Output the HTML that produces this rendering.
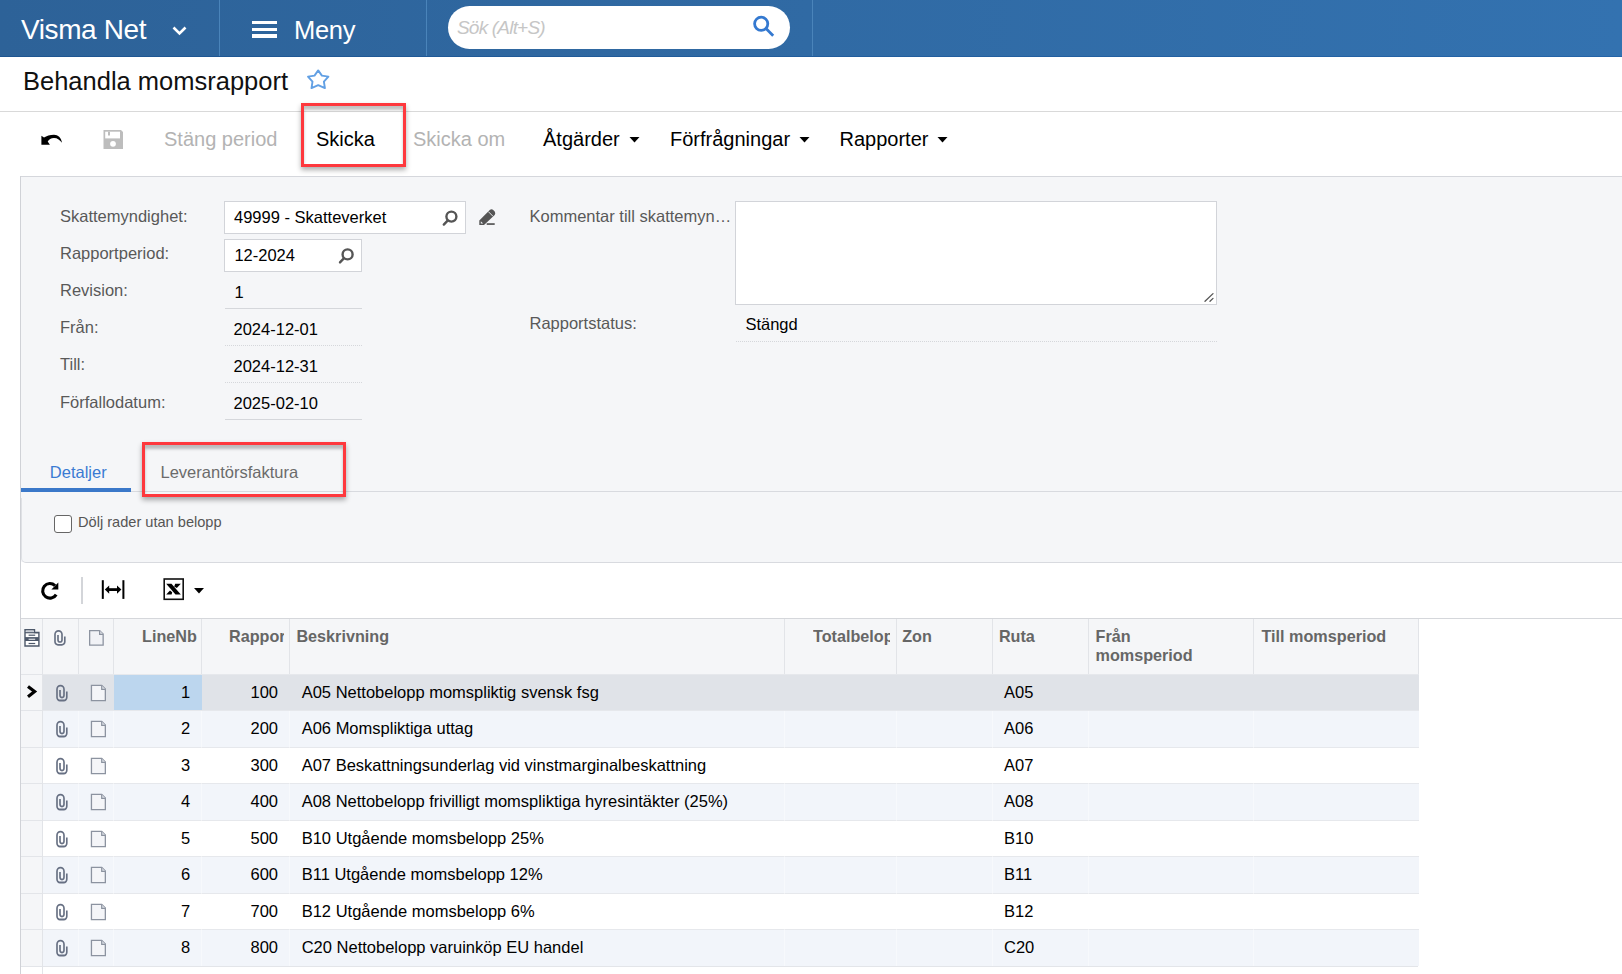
<!DOCTYPE html>
<html><head><meta charset="utf-8">
<style>
*{box-sizing:border-box;margin:0;padding:0}
html,body{width:1622px;height:974px;overflow:hidden;background:#fff}
body{position:relative;font-family:"Liberation Sans",sans-serif;color:#000}
.a{position:absolute}
.t{position:absolute;white-space:nowrap;line-height:1}
svg{position:absolute;overflow:visible}
#hdr{left:0;top:0;width:1622px;height:57px;background:linear-gradient(to right,#2d6298,#3372b0)}
#hdrb{left:0;top:56px;width:1622px;height:1px;background:linear-gradient(to right,#1e5590,#2464a8)}
.vd{position:absolute;top:0;width:1px;height:56px;background:#4a84ba}
.lbl{font-size:16.5px;color:#595959}
.val{font-size:16.5px;color:#000}
.tb{font-size:20px;color:#000}
.tbg{font-size:20px;color:#b3b3b3}
.redbox{position:absolute;border:3px solid #fe383d;box-shadow:0 3px 5px rgba(0,0,0,.32), inset 0 4px 3px rgba(0,0,0,.24)}
.gh{font-size:16.2px;font-weight:bold;color:#666}
.gc{font-size:16.5px;color:#000}
.row{position:absolute;left:42px;width:1376px}
.rowsel{position:absolute;left:21px;width:21px}
.vl{position:absolute;width:1px;background:#e2e4e8}
</style></head><body>

<!-- HEADER -->
<div id="hdr" class="a"></div><div id="hdrb" class="a"></div>
<div class="vd" style="left:219px"></div>
<div class="vd" style="left:426px"></div>
<div class="vd" style="left:812px"></div>
<div class="t" style="left:21px;top:16px;font-size:28px;letter-spacing:-0.4px;color:#fff">Visma Net</div>
<svg style="left:0;top:0" width="1" height="1"><polyline points="173.5,27.5 179.5,33.5 185.5,27.5" fill="none" stroke="#fff" stroke-width="2.6"/></svg>
<div class="a" style="left:252px;top:21px;width:25px;height:3.2px;background:#fff"></div>
<div class="a" style="left:252px;top:27.6px;width:25px;height:3.3px;background:#fff"></div>
<div class="a" style="left:252px;top:34.3px;width:25px;height:3.3px;background:#fff"></div>
<div class="t" style="left:294px;top:17.5px;font-size:25.5px;letter-spacing:-0.3px;color:#fff">Meny</div>
<div class="a" style="left:448px;top:6px;width:342px;height:43px;border-radius:21.5px;background:#fff"></div>
<div class="t" style="left:457px;top:17.6px;font-size:19px;font-style:italic;letter-spacing:-0.8px;color:#c6c6c6">Sök (Alt+S)</div>
<svg style="left:0;top:0" width="1" height="1"><circle cx="761.2" cy="23.8" r="6.6" fill="none" stroke="#3479d0" stroke-width="2.8"/><line x1="766" y1="28.6" x2="773.2" y2="35.8" stroke="#3479d0" stroke-width="2.8"/></svg>

<!-- TITLE -->
<div class="t" style="left:23px;top:68.6px;font-size:25.5px;color:#111">Behandla momsrapport</div>
<svg style="left:0;top:0" width="1" height="1"><polygon points="318.2,70.4 321.9,75.6 328.4,76.6 323.9,81.6 324.9,88.1 318.2,85.2 311.5,88.1 312.5,81.6 308,76.6 314.5,75.6" fill="none" stroke="#62a0e4" stroke-width="1.9" stroke-linejoin="round"/></svg>
<div class="a" style="left:0;top:111px;width:1622px;height:1px;background:#d9d9d9"></div>

<!-- TOOLBAR -->
<svg style="left:0;top:0" width="1" height="1">
 <path d="M41.4,135.8 L44,137.6 C46.5,135.9 50,134.8 54,134.8 C58,134.8 61.2,137.8 62,142.7 C60,140 57.5,137.9 54,137.9 C51,137.9 48.8,139.5 47.7,141.5 L49.9,144.8 L41.4,144.8 Z" fill="#000"/>
</svg>
<svg style="left:0;top:0" width="1" height="1">
 <path d="M103.5,130 L121,130 L123,132 L123,149 L103.5,149 Z" fill="#bdbdbd"/>
 <rect x="105.2" y="131.7" width="14.8" height="6.7" fill="#fff"/>
 <rect x="108" y="131.7" width="2" height="3.8" fill="#bdbdbd"/>
 <circle cx="113" cy="143.8" r="2.9" fill="#fff"/>
</svg>
<div class="t tbg" style="left:164px;top:128.7px">Stäng period</div>
<div class="t tb" style="left:316px;top:128.7px">Skicka</div>
<div class="t tbg" style="left:413px;top:128.7px">Skicka om</div>
<div class="t tb" style="left:543px;top:128.7px">Åtgärder</div>
<div class="t tb" style="left:670px;top:128.7px">Förfrågningar</div>
<div class="t tb" style="left:839.5px;top:128.7px">Rapporter</div>
<svg style="left:0;top:0" width="1" height="1" fill="#000">
 <polygon points="629.5,137 639.5,137 634.5,142.5"/>
 <polygon points="799.5,137 809.5,137 804.5,142.5"/>
 <polygon points="937.5,137 947.5,137 942.5,142.5"/>
</svg>

<!-- FORM PANEL -->
<div class="a" style="left:20px;top:176px;width:1602px;height:386px;background:#f5f6f8;border-top:1px solid #d5d7dc"></div>
<div class="a" style="left:20px;top:176px;width:1px;height:798px;background:#d0d2d7"></div>

<div class="t lbl" style="left:60px;top:208px">Skattemyndighet:</div>
<div class="t lbl" style="left:60px;top:245px">Rapportperiod:</div>
<div class="t lbl" style="left:60px;top:282px">Revision:</div>
<div class="t lbl" style="left:60px;top:318.8px">Från:</div>
<div class="t lbl" style="left:60px;top:356px">Till:</div>
<div class="t lbl" style="left:60px;top:393.5px">Förfallodatum:</div>

<div class="a" style="left:224px;top:201px;width:242px;height:33px;background:#fff;border:1px solid #d2d4d9"></div>
<div class="t val" style="left:234px;top:209px">49999 - Skatteverket</div>
<div class="a" style="left:224px;top:239px;width:138px;height:33px;background:#fff;border:1px solid #d2d4d9"></div>
<div class="t val" style="left:234.4px;top:246.8px">12-2024</div>
<svg style="left:0;top:0" width="1" height="1" stroke="#555" fill="none" stroke-width="2.4" stroke-linecap="round">
 <circle cx="451.4" cy="216.6" r="5"/><line x1="447.6" y1="220.6" x2="443.8" y2="224.6"/>
 <circle cx="347.6" cy="254.4" r="5"/><line x1="343.8" y1="258.4" x2="340" y2="262.4"/>
</svg>
<svg style="left:0;top:0" width="1" height="1">
 <path d="M479.3,220.5 L490,209.8 Q491.8,208.6 493.5,210.3 L494.7,211.5 Q495.9,213.2 494.7,215 L484,225 L479.3,225 Z" fill="#555"/>
 <line x1="488.3" y1="211.6" x2="493" y2="216.3" stroke="#f5f6f8" stroke-width="0.9"/>
 <path d="M480.8,221.3 L483.2,223.6 L480.8,223.6 Z" fill="#f5f6f8"/>
 <rect x="486.7" y="223.2" width="8" height="1.7" fill="#555"/>
</svg>

<div class="t val" style="left:234.5px;top:283.6px">1</div>
<div class="a" style="left:224.5px;top:307.5px;width:137px;height:1px;background:#d5d7db"></div>
<div class="t val" style="left:233.5px;top:320.7px">2024-12-01</div>
<div class="a" style="left:224.5px;top:345px;width:137px;height:0;border-top:1px dotted #d5d7db"></div>
<div class="t val" style="left:233.5px;top:357.9px">2024-12-31</div>
<div class="a" style="left:224.5px;top:382px;width:137px;height:0;border-top:1px dotted #d5d7db"></div>
<div class="t val" style="left:233.5px;top:394.5px">2025-02-10</div>
<div class="a" style="left:224.5px;top:418.7px;width:137px;height:1px;background:#d5d7db"></div>

<div class="t lbl" style="left:529.5px;top:208px">Kommentar till skattemyn…</div>
<div class="a" style="left:735px;top:201px;width:482px;height:104px;background:#fff;border:1px solid #d2d4d9"></div>
<svg style="left:0;top:0" width="1" height="1" stroke="#555" stroke-width="1.3" stroke-linecap="round">
 <line x1="1205" y1="301.3" x2="1213" y2="293.6"/><line x1="1210" y1="301.3" x2="1213" y2="298.4"/>
</svg>
<div class="t lbl" style="left:529.5px;top:314.8px">Rapportstatus:</div>
<div class="t val" style="left:745.4px;top:316.4px">Stängd</div>
<div class="a" style="left:735.5px;top:341px;width:481px;height:0;border-top:1px dotted #d5d7db"></div>

<!-- TABS -->
<div class="t" style="left:49.8px;top:464.2px;font-size:16.5px;color:#3a7bd3">Detaljer</div>
<div class="t" style="left:160.5px;top:464.2px;font-size:16.5px;color:#6b6b6b">Leverantörsfaktura</div>
<div class="a" style="left:21px;top:488px;width:110px;height:4px;background:#3a78c9"></div>
<div class="a" style="left:131px;top:491px;width:1491px;height:1px;background:#d8dadf"></div>
<div class="a" style="left:21px;top:498px;width:1601px;height:65px;border-left:1px solid #dfe1e5;border-bottom:1px solid #d8dadf;border-bottom-left-radius:5px"></div>
<div class="a" style="left:54px;top:515px;width:17.6px;height:17.6px;border:1.8px solid #666;border-radius:3px;background:#fff"></div>
<div class="t" style="left:78px;top:515.2px;font-size:14.6px;color:#555">Dölj rader utan belopp</div>

<!-- GRID TOOLBAR -->
<svg style="left:0;top:0" width="1" height="1">
 <path d="M55,585.6 A7.3,7.3 0 1 0 56.2,594.6" fill="none" stroke="#000" stroke-width="3.1"/>
 <polygon points="51.4,589.4 58.3,589.4 58.3,582.4" fill="#000"/>
</svg>
<div class="a" style="left:81px;top:577px;width:2px;height:27px;background:#d3d5d9"></div>
<svg style="left:0;top:0" width="1" height="1">
 <rect x="101.8" y="580.2" width="2" height="18.7" fill="#000"/>
 <rect x="122.4" y="580.2" width="2" height="18.7" fill="#000"/>
 <rect x="107" y="588.2" width="12" height="2.8" fill="#000"/>
 <polygon points="104.8,589.6 109.2,585.4 109.2,593.8" fill="#000"/>
 <polygon points="121.4,589.6 117,585.4 117,593.8" fill="#000"/>
</svg>
<svg style="left:0;top:0" width="1" height="1">
 <rect x="164.2" y="579" width="19" height="20.3" fill="none" stroke="#111" stroke-width="1.6"/>
 <path d="M166.2,583.8 L171.5,583.8 L180.8,594.6 L175.5,594.6 Z" fill="#000"/>
 <path d="M175.2,583.8 L180.8,583.8 L176.8,588 L174.2,586.4 Z" fill="#000"/>
 <path d="M166.2,594.6 L170,590.4 L172.2,592.2 L171.6,594.6 Z" fill="#000"/>
</svg>
<svg style="left:0;top:0" width="1" height="1"><polygon points="194,588 204,588 199,593.6" fill="#000"/></svg>

<!-- GRID -->
<div class="a" style="left:21px;top:618px;width:1601px;height:1px;background:#d5d7db"></div>
<div class="a" style="left:21px;top:619px;width:1397px;height:55.2px;background:#f5f6f8"></div>

<!--ROWS-->
<div class="a" style="left:21px;top:674.00px;width:21px;height:36.00px;background:#f5f6f8;border-top:1px solid #e3e5e9"></div>
<div class="a" style="left:42px;top:674.00px;width:1377px;height:36.00px;background:#e0e3e8;border-top:1px solid #e6e8ec"></div>
<div class="a" style="left:114px;top:675.00px;width:88px;height:35.00px;background:#bcd6ee"></div>
<svg style="left:0;top:0" width="1" height="1"><polyline points="28,686.40 34.6,691.60 28,696.80" fill="none" stroke="#000" stroke-width="3.2"/></svg>
<svg style="left:0;top:0" width="1" height="1"><g transform="translate(56,683.60) scale(1,1.07)"><path d="M4,6 L4,11 A2,2 0 0 0 8,11 L8,5.3 A3.5,3.5 0 0 0 1,5.3 L1,12.8 A3,3 0 0 0 4,15.8 L7.8,15.8 A3,3 0 0 0 10.8,12.8 L10.8,7.5" fill="none" stroke="#677083" stroke-width="1.65"/></g></svg>
<svg style="left:0;top:0" width="1" height="1"><g transform="translate(90.8,684.80)"><path d="M0.65,0.65 L10.9,0.65 L14.55,4.3 L14.55,15.75 L0.65,15.75 Z" fill="#f4f5f8" stroke="#8c93a0" stroke-width="1.3"/><path d="M10.9,0.65 L10.9,4.5 L14.55,4.5" fill="#dfe2e8" stroke="#8c93a0" stroke-width="1.2"/></g></svg>
<div class="t gc" style="right:1431.8px;top:683.63px">1</div>
<div class="t gc" style="right:1344.0px;top:683.63px">100</div>
<div class="t gc" style="left:301.7px;top:683.63px">A05 Nettobelopp momspliktig svensk fsg</div>
<div class="t gc" style="left:1004px;top:683.63px">A05</div>
<div class="a" style="left:21px;top:710.00px;width:21px;height:37.00px;background:#f5f6f8;border-top:1px solid #e3e5e9"></div>
<div class="a" style="left:42px;top:710.00px;width:1377px;height:37.00px;background:#f2f5fa;border-top:1px solid #e6e8ec"></div>
<svg style="left:0;top:0" width="1" height="1"><g transform="translate(56,719.60) scale(1,1.07)"><path d="M4,6 L4,11 A2,2 0 0 0 8,11 L8,5.3 A3.5,3.5 0 0 0 1,5.3 L1,12.8 A3,3 0 0 0 4,15.8 L7.8,15.8 A3,3 0 0 0 10.8,12.8 L10.8,7.5" fill="none" stroke="#677083" stroke-width="1.65"/></g></svg>
<svg style="left:0;top:0" width="1" height="1"><g transform="translate(90.8,720.80)"><path d="M0.65,0.65 L10.9,0.65 L14.55,4.3 L14.55,15.75 L0.65,15.75 Z" fill="#f4f5f8" stroke="#8c93a0" stroke-width="1.3"/><path d="M10.9,0.65 L10.9,4.5 L14.55,4.5" fill="#dfe2e8" stroke="#8c93a0" stroke-width="1.2"/></g></svg>
<div class="t gc" style="right:1431.8px;top:719.63px">2</div>
<div class="t gc" style="right:1344.0px;top:719.63px">200</div>
<div class="t gc" style="left:301.7px;top:719.63px">A06 Momspliktiga uttag</div>
<div class="t gc" style="left:1004px;top:719.63px">A06</div>
<div class="a" style="left:21px;top:747.00px;width:21px;height:36.00px;background:#f5f6f8;border-top:1px solid #e3e5e9"></div>
<div class="a" style="left:42px;top:747.00px;width:1377px;height:36.00px;background:#ffffff;border-top:1px solid #e6e8ec"></div>
<svg style="left:0;top:0" width="1" height="1"><g transform="translate(56,756.60) scale(1,1.07)"><path d="M4,6 L4,11 A2,2 0 0 0 8,11 L8,5.3 A3.5,3.5 0 0 0 1,5.3 L1,12.8 A3,3 0 0 0 4,15.8 L7.8,15.8 A3,3 0 0 0 10.8,12.8 L10.8,7.5" fill="none" stroke="#677083" stroke-width="1.65"/></g></svg>
<svg style="left:0;top:0" width="1" height="1"><g transform="translate(90.8,757.80)"><path d="M0.65,0.65 L10.9,0.65 L14.55,4.3 L14.55,15.75 L0.65,15.75 Z" fill="#f4f5f8" stroke="#8c93a0" stroke-width="1.3"/><path d="M10.9,0.65 L10.9,4.5 L14.55,4.5" fill="#dfe2e8" stroke="#8c93a0" stroke-width="1.2"/></g></svg>
<div class="t gc" style="right:1431.8px;top:756.63px">3</div>
<div class="t gc" style="right:1344.0px;top:756.63px">300</div>
<div class="t gc" style="left:301.7px;top:756.63px">A07 Beskattningsunderlag vid vinstmarginalbeskattning</div>
<div class="t gc" style="left:1004px;top:756.63px">A07</div>
<div class="a" style="left:21px;top:783.00px;width:21px;height:37.00px;background:#f5f6f8;border-top:1px solid #e3e5e9"></div>
<div class="a" style="left:42px;top:783.00px;width:1377px;height:37.00px;background:#f2f5fa;border-top:1px solid #e6e8ec"></div>
<svg style="left:0;top:0" width="1" height="1"><g transform="translate(56,792.60) scale(1,1.07)"><path d="M4,6 L4,11 A2,2 0 0 0 8,11 L8,5.3 A3.5,3.5 0 0 0 1,5.3 L1,12.8 A3,3 0 0 0 4,15.8 L7.8,15.8 A3,3 0 0 0 10.8,12.8 L10.8,7.5" fill="none" stroke="#677083" stroke-width="1.65"/></g></svg>
<svg style="left:0;top:0" width="1" height="1"><g transform="translate(90.8,793.80)"><path d="M0.65,0.65 L10.9,0.65 L14.55,4.3 L14.55,15.75 L0.65,15.75 Z" fill="#f4f5f8" stroke="#8c93a0" stroke-width="1.3"/><path d="M10.9,0.65 L10.9,4.5 L14.55,4.5" fill="#dfe2e8" stroke="#8c93a0" stroke-width="1.2"/></g></svg>
<div class="t gc" style="right:1431.8px;top:792.63px">4</div>
<div class="t gc" style="right:1344.0px;top:792.63px">400</div>
<div class="t gc" style="left:301.7px;top:792.63px">A08 Nettobelopp frivilligt momspliktiga hyresintäkter (25%)</div>
<div class="t gc" style="left:1004px;top:792.63px">A08</div>
<div class="a" style="left:21px;top:820.00px;width:21px;height:36.00px;background:#f5f6f8;border-top:1px solid #e3e5e9"></div>
<div class="a" style="left:42px;top:820.00px;width:1377px;height:36.00px;background:#ffffff;border-top:1px solid #e6e8ec"></div>
<svg style="left:0;top:0" width="1" height="1"><g transform="translate(56,829.60) scale(1,1.07)"><path d="M4,6 L4,11 A2,2 0 0 0 8,11 L8,5.3 A3.5,3.5 0 0 0 1,5.3 L1,12.8 A3,3 0 0 0 4,15.8 L7.8,15.8 A3,3 0 0 0 10.8,12.8 L10.8,7.5" fill="none" stroke="#677083" stroke-width="1.65"/></g></svg>
<svg style="left:0;top:0" width="1" height="1"><g transform="translate(90.8,830.80)"><path d="M0.65,0.65 L10.9,0.65 L14.55,4.3 L14.55,15.75 L0.65,15.75 Z" fill="#f4f5f8" stroke="#8c93a0" stroke-width="1.3"/><path d="M10.9,0.65 L10.9,4.5 L14.55,4.5" fill="#dfe2e8" stroke="#8c93a0" stroke-width="1.2"/></g></svg>
<div class="t gc" style="right:1431.8px;top:829.63px">5</div>
<div class="t gc" style="right:1344.0px;top:829.63px">500</div>
<div class="t gc" style="left:301.7px;top:829.63px">B10 Utgående momsbelopp 25%</div>
<div class="t gc" style="left:1004px;top:829.63px">B10</div>
<div class="a" style="left:21px;top:856.00px;width:21px;height:37.00px;background:#f5f6f8;border-top:1px solid #e3e5e9"></div>
<div class="a" style="left:42px;top:856.00px;width:1377px;height:37.00px;background:#f2f5fa;border-top:1px solid #e6e8ec"></div>
<svg style="left:0;top:0" width="1" height="1"><g transform="translate(56,865.60) scale(1,1.07)"><path d="M4,6 L4,11 A2,2 0 0 0 8,11 L8,5.3 A3.5,3.5 0 0 0 1,5.3 L1,12.8 A3,3 0 0 0 4,15.8 L7.8,15.8 A3,3 0 0 0 10.8,12.8 L10.8,7.5" fill="none" stroke="#677083" stroke-width="1.65"/></g></svg>
<svg style="left:0;top:0" width="1" height="1"><g transform="translate(90.8,866.80)"><path d="M0.65,0.65 L10.9,0.65 L14.55,4.3 L14.55,15.75 L0.65,15.75 Z" fill="#f4f5f8" stroke="#8c93a0" stroke-width="1.3"/><path d="M10.9,0.65 L10.9,4.5 L14.55,4.5" fill="#dfe2e8" stroke="#8c93a0" stroke-width="1.2"/></g></svg>
<div class="t gc" style="right:1431.8px;top:865.63px">6</div>
<div class="t gc" style="right:1344.0px;top:865.63px">600</div>
<div class="t gc" style="left:301.7px;top:865.63px">B11 Utgående momsbelopp 12%</div>
<div class="t gc" style="left:1004px;top:865.63px">B11</div>
<div class="a" style="left:21px;top:893.00px;width:21px;height:36.00px;background:#f5f6f8;border-top:1px solid #e3e5e9"></div>
<div class="a" style="left:42px;top:893.00px;width:1377px;height:36.00px;background:#ffffff;border-top:1px solid #e6e8ec"></div>
<svg style="left:0;top:0" width="1" height="1"><g transform="translate(56,902.60) scale(1,1.07)"><path d="M4,6 L4,11 A2,2 0 0 0 8,11 L8,5.3 A3.5,3.5 0 0 0 1,5.3 L1,12.8 A3,3 0 0 0 4,15.8 L7.8,15.8 A3,3 0 0 0 10.8,12.8 L10.8,7.5" fill="none" stroke="#677083" stroke-width="1.65"/></g></svg>
<svg style="left:0;top:0" width="1" height="1"><g transform="translate(90.8,903.80)"><path d="M0.65,0.65 L10.9,0.65 L14.55,4.3 L14.55,15.75 L0.65,15.75 Z" fill="#f4f5f8" stroke="#8c93a0" stroke-width="1.3"/><path d="M10.9,0.65 L10.9,4.5 L14.55,4.5" fill="#dfe2e8" stroke="#8c93a0" stroke-width="1.2"/></g></svg>
<div class="t gc" style="right:1431.8px;top:902.63px">7</div>
<div class="t gc" style="right:1344.0px;top:902.63px">700</div>
<div class="t gc" style="left:301.7px;top:902.63px">B12 Utgående momsbelopp 6%</div>
<div class="t gc" style="left:1004px;top:902.63px">B12</div>
<div class="a" style="left:21px;top:929.00px;width:21px;height:37.00px;background:#f5f6f8;border-top:1px solid #e3e5e9"></div>
<div class="a" style="left:42px;top:929.00px;width:1377px;height:37.00px;background:#f2f5fa;border-top:1px solid #e6e8ec"></div>
<svg style="left:0;top:0" width="1" height="1"><g transform="translate(56,938.60) scale(1,1.07)"><path d="M4,6 L4,11 A2,2 0 0 0 8,11 L8,5.3 A3.5,3.5 0 0 0 1,5.3 L1,12.8 A3,3 0 0 0 4,15.8 L7.8,15.8 A3,3 0 0 0 10.8,12.8 L10.8,7.5" fill="none" stroke="#677083" stroke-width="1.65"/></g></svg>
<svg style="left:0;top:0" width="1" height="1"><g transform="translate(90.8,939.80)"><path d="M0.65,0.65 L10.9,0.65 L14.55,4.3 L14.55,15.75 L0.65,15.75 Z" fill="#f4f5f8" stroke="#8c93a0" stroke-width="1.3"/><path d="M10.9,0.65 L10.9,4.5 L14.55,4.5" fill="#dfe2e8" stroke="#8c93a0" stroke-width="1.2"/></g></svg>
<div class="t gc" style="right:1431.8px;top:938.63px">8</div>
<div class="t gc" style="right:1344.0px;top:938.63px">800</div>
<div class="t gc" style="left:301.7px;top:938.63px">C20 Nettobelopp varuinköp EU handel</div>
<div class="t gc" style="left:1004px;top:938.63px">C20</div>
<div class="a" style="left:78px;top:711px;width:1px;height:255px;background:rgba(255,255,255,.4)"></div>
<div class="a" style="left:113px;top:711px;width:1px;height:255px;background:rgba(255,255,255,.4)"></div>
<div class="a" style="left:201px;top:711px;width:1px;height:255px;background:rgba(255,255,255,.4)"></div>
<div class="a" style="left:289px;top:711px;width:1px;height:255px;background:rgba(255,255,255,.4)"></div>
<div class="a" style="left:784px;top:711px;width:1px;height:255px;background:rgba(255,255,255,.4)"></div>
<div class="a" style="left:896px;top:711px;width:1px;height:255px;background:rgba(255,255,255,.4)"></div>
<div class="a" style="left:992px;top:711px;width:1px;height:255px;background:rgba(255,255,255,.4)"></div>
<div class="a" style="left:1088px;top:711px;width:1px;height:255px;background:rgba(255,255,255,.4)"></div>
<div class="a" style="left:1253px;top:711px;width:1px;height:255px;background:rgba(255,255,255,.4)"></div>
<div class="a" style="left:21px;top:966.00px;width:1397px;height:1px;background:#e3e5e9"></div>
<!--/ROWS-->

<!-- header col lines -->
<div class="vl" style="left:42px;top:619px;height:355px"></div>
<div class="vl" style="left:78px;top:619px;height:55px"></div>
<div class="vl" style="left:113px;top:619px;height:55px"></div>
<div class="vl" style="left:201px;top:619px;height:55px"></div>
<div class="vl" style="left:289px;top:619px;height:55px"></div>
<div class="vl" style="left:784px;top:619px;height:55px"></div>
<div class="vl" style="left:896px;top:619px;height:55px"></div>
<div class="vl" style="left:992px;top:619px;height:55px"></div>
<div class="vl" style="left:1088px;top:619px;height:55px"></div>
<div class="vl" style="left:1253px;top:619px;height:55px"></div>
<div class="vl" style="left:1418px;top:619px;height:55px"></div>

<div class="t gh" style="left:142px;top:628px">LineNb</div>
<div class="a" style="left:229px;top:628px;width:55px;height:20px;overflow:hidden"><div class="t gh" style="left:0;top:0">Rapportkod</div></div>
<div class="t gh" style="left:296.4px;top:628px">Beskrivning</div>
<div class="a" style="left:813px;top:628px;width:77.4px;height:20px;overflow:hidden"><div class="t gh" style="left:0;top:0">Totalbelopp</div></div>
<div class="t gh" style="left:902.2px;top:628px">Zon</div>
<div class="t gh" style="left:998.9px;top:628px">Ruta</div>
<div class="t gh" style="left:1095.5px;top:628px">Från</div>
<div class="t gh" style="left:1095.5px;top:647px">momsperiod</div>
<div class="t gh" style="left:1261.5px;top:628px">Till momsperiod</div>


<!-- GRID HEADER ICONS -->
<svg style="left:0;top:0" width="1" height="1">
 <path d="M25,629.7 L34.5,629.7 L34.5,632.5 L38.9,632.5 L38.9,646 L25,646 Z" fill="#fff" stroke="#4d586a" stroke-width="1.4"/>
 <rect x="26.2" y="630.6" width="7.4" height="1.6" fill="#c6cbd3"/>
 <line x1="25" y1="632.7" x2="38.9" y2="632.7" stroke="#4d586a" stroke-width="1.2"/>
 <rect x="25" y="637.1" width="13.9" height="3.9" fill="#4d586a"/>
 <rect x="28.6" y="638.7" width="6.6" height="1.1" fill="#e9ebef"/>
 <rect x="28.6" y="634.6" width="6.6" height="1.2" fill="#4d586a"/>
 <rect x="28.6" y="642.9" width="6.6" height="1.2" fill="#4d586a"/>
</svg>
<svg style="left:0;top:0" width="1" height="1"><g transform="translate(54,629)">
 <path d="M4,6 L4,11 A2,2 0 0 0 8,11 L8,5.3 A3.5,3.5 0 0 0 1,5.3 L1,12.8 A3,3 0 0 0 4,15.8 L7.8,15.8 A3,3 0 0 0 10.8,12.8 L10.8,7.5" fill="none" stroke="#677083" stroke-width="1.65"/></g></svg>
<svg style="left:0;top:0" width="1" height="1"><g transform="translate(89,629.9)">
 <path d="M0.65,0.65 L10.6,0.65 L14.15,4.2 L14.15,15.25 L0.65,15.25 Z" fill="#f1f2f6" stroke="#8c93a0" stroke-width="1.3"/>
 <path d="M10.6,0.65 L10.6,4.4 L14.15,4.4" fill="#dfe2e8" stroke="#8c93a0" stroke-width="1.2"/></g></svg>

<!-- RED ANNOTATION BOXES -->
<div class="redbox" style="left:300.7px;top:103px;width:105.3px;height:64px"></div>
<div class="redbox" style="left:142px;top:442.2px;width:203.6px;height:54.4px"></div>
</body></html>
